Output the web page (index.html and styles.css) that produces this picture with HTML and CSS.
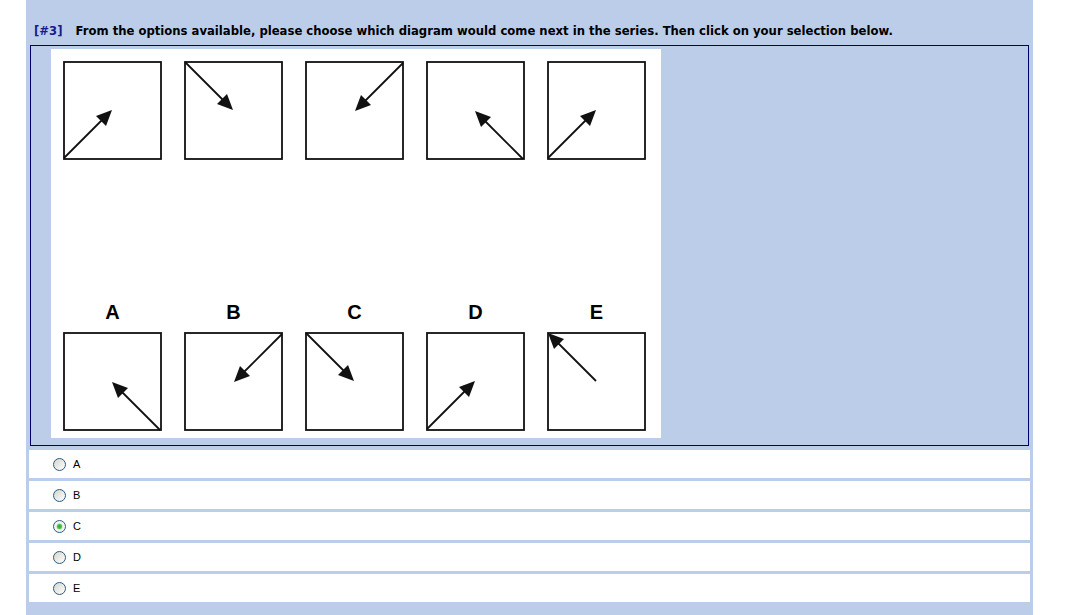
FILE: index.html
```html
<!DOCTYPE html>
<html>
<head>
<meta charset="utf-8">
<link rel="stylesheet" href="styles.css">
</head>
<body>
<svg width="0" height="0" class="defs">
  <defs>
    <g id="tile">
      <rect x="1" y="1" width="97" height="97" fill="#fff" stroke="#111" stroke-width="1.8"/>
    </g>
    <g id="arrowIn">
      <line x1="1" y1="97" x2="41" y2="57" stroke="#111" stroke-width="1.8"/>
      <polygon points="49,49 33,55 43,65" fill="#111"/>
    </g>
    <g id="arrowOut">
      <line x1="49" y1="49" x2="9" y2="9" stroke="#111" stroke-width="1.8"/>
      <polygon points="1,1 17,7 7,17" fill="#111"/>
    </g>
  </defs>
</svg>
<div class="panel">
  <div class="question"><span class="qnum">[#3]</span><span class="qtext">From the options available, please choose which diagram would come next in the series. Then click on your selection below.</span></div>
  <div class="box">
    <div class="figure">
      <div class="row">
        <svg class="tile" viewBox="0 0 99 99"><use href="#tile"/><use href="#arrowIn"/></svg>
        <svg class="tile" viewBox="0 0 99 99"><use href="#tile"/><use href="#arrowIn" transform="rotate(90 49 49)"/></svg>
        <svg class="tile" viewBox="0 0 99 99"><use href="#tile"/><use href="#arrowIn" transform="rotate(180 49.5 49.5)"/></svg>
        <svg class="tile" viewBox="0 0 99 99"><use href="#tile"/><use href="#arrowIn" transform="rotate(270 49.5 49.5)"/></svg>
        <svg class="tile" viewBox="0 0 99 99"><use href="#tile"/><use href="#arrowIn"/></svg>
      </div>
      <div class="row labels">
        <div class="label">A</div>
        <div class="label">B</div>
        <div class="label">C</div>
        <div class="label">D</div>
        <div class="label">E</div>
      </div>
      <div class="row">
        <svg class="tile" viewBox="0 0 99 99"><use href="#tile"/><use href="#arrowIn" transform="rotate(270 49.5 49.5)"/></svg>
        <svg class="tile" viewBox="0 0 99 99"><use href="#tile"/><use href="#arrowIn" transform="rotate(180 49.5 49.5)"/></svg>
        <svg class="tile" viewBox="0 0 99 99"><use href="#tile"/><use href="#arrowIn" transform="rotate(90 49 49)"/></svg>
        <svg class="tile" viewBox="0 0 99 99"><use href="#tile"/><use href="#arrowIn"/></svg>
        <svg class="tile" viewBox="0 0 99 99"><use href="#tile"/><use href="#arrowOut"/></svg>
      </div>
    </div>
  </div>
  <div class="options">
    <label class="option"><input type="radio" name="q3" class="radio"><span>A</span></label>
    <label class="option"><input type="radio" name="q3" class="radio"><span>B</span></label>
    <label class="option"><input type="radio" name="q3" class="radio" checked><span>C</span></label>
    <label class="option"><input type="radio" name="q3" class="radio"><span>D</span></label>
    <label class="option"><input type="radio" name="q3" class="radio"><span>E</span></label>
  </div>
</div>
</body>
</html>
```
FILE: styles.css
```css
html, body {
  margin: 0;
  padding: 0;
  background: #fff;
}
.defs {
  position: absolute;
  width: 0;
  height: 0;
}
.panel {
  margin-left: 26px;
  width: 1007px;
  min-height: 615px;
  background: #bccde9;
  padding-top: 22px;
  box-sizing: border-box;
}
.question {
  font-family: "DejaVu Sans", Verdana, sans-serif;
  font-weight: bold;
  font-size: 11.65px;
  line-height: 18px;
  height: 23px;
  padding-left: 8px;
  color: #000;
  white-space: nowrap;
}
.qnum {
  color: #1a1a8c;
  margin-right: 13px;
}
.box {
  margin: 0 4px 0 4px;
  border: 1px solid #00006b;
  padding: 3px 0 7px 20px;
  height: 389px;
}
.figure {
  width: 610px;
  height: 389px;
  background: #fff;
  padding: 12px 0 0 12px;
  box-sizing: border-box;
}
.row {
  display: flex;
  gap: 22px;
}
.tile {
  width: 99px;
  height: 99px;
  display: block;
}
.labels {
  margin-top: 140px;
  height: 24px;
  margin-bottom: 8px;
}
.label {
  width: 99px;
  text-align: center;
  font-family: "Liberation Sans", Arial, sans-serif;
  font-weight: bold;
  font-size: 20px;
  line-height: 24px;
  color: #000;
}
.options {
  padding: 4px 3px 0 3px;
  display: flex;
  flex-direction: column;
  gap: 3px;
}
.option {
  display: flex;
  align-items: center;
  height: 28px;
  background: #fff;
  padding-left: 24px;
  font-family: "Liberation Sans", Arial, sans-serif;
  font-size: 11px;
  color: #000;
}
.radio {
  appearance: none;
  -webkit-appearance: none;
  width: 13px;
  height: 13px;
  margin: 0 7px 0 0;
  border: 1px solid #2c5a80;
  border-radius: 50%;
  box-sizing: border-box;
  background: linear-gradient(135deg, #d6d6d0 0%, #eeeeea 60%, #ffffff 100%);
  position: relative;
}
.radio:checked {
  background: radial-gradient(circle, #2ca82c 0, #4cc24c 2px, #7fd37f 2.6px, #eeeeea 3.2px, #ffffff 100%);
}
```
